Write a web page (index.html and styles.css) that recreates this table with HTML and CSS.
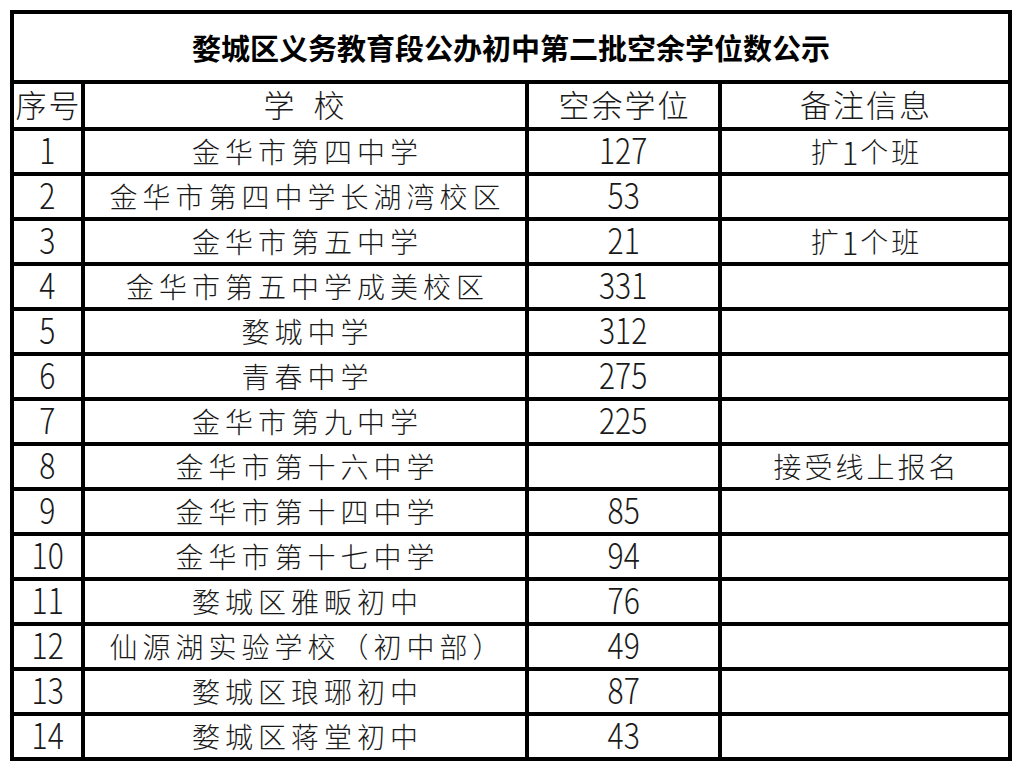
FILE: index.html
```html
<!DOCTYPE html>
<html lang="zh-CN">
<head>
<meta charset="utf-8">
<title>婺城区义务教育段公办初中第二批空余学位数公示</title>
<link rel="stylesheet" href="styles.css">
</head>
<body>
<div class="sheet">
  <div class="cell title">婺城区义务教育段公办初中第二批空余学位数公示</div>
  <div class="cell head">序号</div>
  <div class="cell head school-head">学 校</div>
  <div class="cell head">空余学位</div>
  <div class="cell head">备注信息</div>

  <div class="cell num"><span class="n">1</span></div><div class="cell school">金华市第四中学</div><div class="cell num"><span class="n">127</span></div><div class="cell note">扩<span class="d">1</span>个班</div>
  <div class="cell num"><span class="n">2</span></div><div class="cell school">金华市第四中学长湖湾校区</div><div class="cell num"><span class="n">53</span></div><div class="cell note"></div>
  <div class="cell num"><span class="n">3</span></div><div class="cell school">金华市第五中学</div><div class="cell num"><span class="n">21</span></div><div class="cell note">扩<span class="d">1</span>个班</div>
  <div class="cell num"><span class="n">4</span></div><div class="cell school">金华市第五中学成美校区</div><div class="cell num"><span class="n">331</span></div><div class="cell note"></div>
  <div class="cell num"><span class="n">5</span></div><div class="cell school">婺城中学</div><div class="cell num"><span class="n">312</span></div><div class="cell note"></div>
  <div class="cell num"><span class="n">6</span></div><div class="cell school">青春中学</div><div class="cell num"><span class="n">275</span></div><div class="cell note"></div>
  <div class="cell num"><span class="n">7</span></div><div class="cell school">金华市第九中学</div><div class="cell num"><span class="n">225</span></div><div class="cell note"></div>
  <div class="cell num"><span class="n">8</span></div><div class="cell school">金华市第十六中学</div><div class="cell num"></div><div class="cell note">接受线上报名</div>
  <div class="cell num"><span class="n">9</span></div><div class="cell school">金华市第十四中学</div><div class="cell num"><span class="n">85</span></div><div class="cell note"></div>
  <div class="cell num"><span class="n">10</span></div><div class="cell school">金华市第十七中学</div><div class="cell num"><span class="n">94</span></div><div class="cell note"></div>
  <div class="cell num"><span class="n">11</span></div><div class="cell school">婺城区雅畈初中</div><div class="cell num"><span class="n">76</span></div><div class="cell note"></div>
  <div class="cell num"><span class="n">12</span></div><div class="cell school">仙源湖实验学校（初中部）</div><div class="cell num"><span class="n">49</span></div><div class="cell note"></div>
  <div class="cell num"><span class="n">13</span></div><div class="cell school">婺城区琅琊初中</div><div class="cell num"><span class="n">87</span></div><div class="cell note"></div>
  <div class="cell num"><span class="n">14</span></div><div class="cell school">婺城区蒋堂初中</div><div class="cell num"><span class="n">43</span></div><div class="cell note"></div>
</div>
</body>
</html>
```

FILE: styles.css
```css
html, body {
  margin: 0;
  padding: 0;
  background: #ffffff;
}

body {
  padding: 10px 0 0 10px;
  font-family: "Noto Sans CJK SC", sans-serif;
  color: #1a1a1a;
}

.sheet {
  display: grid;
  grid-template-columns: 67px 440px 189px 286px;
  grid-template-rows: 66px 43px repeat(14, 41px);
  gap: 4px;
  padding: 4px;
  background: #000000;
  width: max-content;
}

.cell {
  background: #ffffff;
  display: flex;
  align-items: center;
  justify-content: center;
  white-space: nowrap;
  line-height: 1.2;
}

.title {
  grid-column: 1 / -1;
  font-weight: 700;
  font-size: 29px;
  color: #000000;
}

.head {
  font-weight: 300;
  font-size: 31px;
  line-height: 1.1;
  letter-spacing: 2px;
  padding-left: 2px;
  padding-bottom: 2px;
}

.school-head {
  letter-spacing: 4px;
  word-spacing: 4px;
}

.num {
  font-size: 35px;
  font-weight: 300;
  line-height: 1;
  padding-bottom: 6px;
}

.n {
  display: inline-block;
  transform: scaleX(0.86);
}

.school, .note {
  font-weight: 300;
  font-size: 28px;
  letter-spacing: 5px;
  padding-left: 5px;
  padding-top: 1px;
}

.note {
  letter-spacing: 3px;
  padding-left: 3px;
}

.d {
  font-size: 31px;
  letter-spacing: 2px;
}
```
